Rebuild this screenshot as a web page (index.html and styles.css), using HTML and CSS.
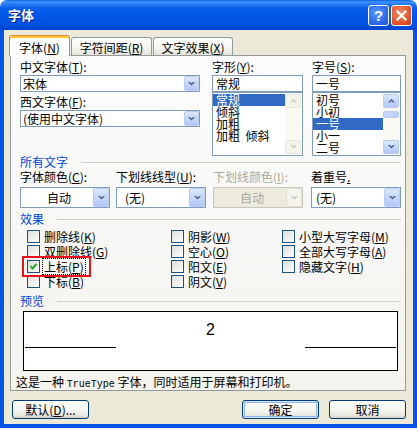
FILE: index.html
```html
<!DOCTYPE html>
<html>
<head>
<meta charset="utf-8">
<link rel="stylesheet" href="styles.css">
</head>
<body>
<div class="window">
	<div class="titlebar">
		<span class="title">字体</span>
		<span class="tb-btn help">?</span>
		<span class="tb-btn close"><svg width="11" height="11" viewBox="0 0 11 11"><path d="M1.5 1.5 L9.5 9.5 M9.5 1.5 L1.5 9.5" stroke="#fff" stroke-width="2.2" stroke-linecap="square"/></svg></span>
	</div>
	<div class="client">
		<div class="tabs">
			<div class="tab active">字体(<u>N</u>)</div>
			<div class="tab t2">字符间距(<u>R</u>)</div>
			<div class="tab t3">文字效果(<u>X</u>)</div>
		</div>
		<div class="panel">
			<div class="fonts">
				<div class="col-face">
					<div class="lbl">中文字体(<u>T</u>):</div>
					<div class="combo small"><span class="combo-text">宋体</span><span class="combo-btn"><svg width="7" height="4" viewBox="0 0 7 4"><polygon points="0,0 2,0 3.5,1.5 5,0 7,0 3.5,3.5" fill="#4D6185"/></svg></span></div>
					<div class="lbl second">西文字体(<u>F</u>):</div>
					<div class="combo small"><span class="combo-text">(使用中文字体)</span><span class="combo-btn"><svg width="7" height="4" viewBox="0 0 7 4"><polygon points="0,0 2,0 3.5,1.5 5,0 7,0 3.5,3.5" fill="#4D6185"/></svg></span></div>
				</div>
				<div class="col-style">
					<div class="lbl">字形(<u>Y</u>):</div>
					<div class="field">常规</div>
					<div class="listbox">
						<div class="items">
							<div class="item sel">常规</div>
							<div class="item">倾斜</div>
							<div class="item">加粗</div>
							<div class="item">加粗&nbsp; 倾斜</div>
						</div>
						<div class="sbar off">
							<span class="sbtn"><svg width="7" height="4" viewBox="0 0 7 4"><polygon points="0,3.5 2,3.5 3.5,2 5,3.5 7,3.5 3.5,0" fill="#C9C7BA"/></svg></span>
							<span class="strack"></span>
							<span class="sbtn"><svg width="7" height="4" viewBox="0 0 7 4"><polygon points="0,0 2,0 3.5,1.5 5,0 7,0 3.5,3.5" fill="#C9C7BA"/></svg></span>
						</div>
					</div>
				</div>
				<div class="col-size">
					<div class="lbl">字号(<u>S</u>):</div>
					<div class="field">一号</div>
					<div class="listbox">
						<div class="items">
							<div class="item">初号</div>
							<div class="item">小初</div>
							<div class="item sel">一号</div>
							<div class="item">小一</div>
							<div class="item">二号</div>
						</div>
						<div class="sbar">
							<span class="sbtn"><svg width="7" height="4" viewBox="0 0 7 4"><polygon points="0,3.5 2,3.5 3.5,2 5,3.5 7,3.5 3.5,0" fill="#4D6185"/></svg></span>
							<span class="thumb"></span>
							<span class="strack"></span>
							<span class="sbtn"><svg width="7" height="4" viewBox="0 0 7 4"><polygon points="0,0 2,0 3.5,1.5 5,0 7,0 3.5,3.5" fill="#4D6185"/></svg></span>
						</div>
					</div>
				</div>
			</div>

			<div class="group">所有文字</div>
			<div class="fmt-row">
				<div>
					<div class="lbl">字体颜色(<u>C</u>):</div>
					<div class="combo"><span class="combo-text center">自动</span><span class="combo-btn"><svg width="7" height="4" viewBox="0 0 7 4"><polygon points="0,0 2,0 3.5,1.5 5,0 7,0 3.5,3.5" fill="#4D6185"/></svg></span></div>
				</div>
				<div>
					<div class="lbl">下划线线型(<u>U</u>):</div>
					<div class="combo"><span class="combo-text wide">(无)</span><span class="combo-btn"><svg width="7" height="4" viewBox="0 0 7 4"><polygon points="0,0 2,0 3.5,1.5 5,0 7,0 3.5,3.5" fill="#4D6185"/></svg></span></div>
				</div>
				<div>
					<div class="lbl dim">下划线颜色(<u>I</u>):</div>
					<div class="combo off"><span class="combo-text center">自动</span><span class="combo-btn"><svg width="7" height="4" viewBox="0 0 7 4"><polygon points="0,0 2,0 3.5,1.5 5,0 7,0 3.5,3.5" fill="#C9C7BA"/></svg></span></div>
				</div>
				<div>
					<div class="lbl">着重号<u>.</u></div>
					<div class="combo"><span class="combo-text">(无)</span><span class="combo-btn"><svg width="7" height="4" viewBox="0 0 7 4"><polygon points="0,0 2,0 3.5,1.5 5,0 7,0 3.5,3.5" fill="#4D6185"/></svg></span></div>
				</div>
			</div>

			<div class="group short">效果</div>
			<div class="checks">
				<div class="check"><span class="box"></span>删除线(<u>K</u>)</div>
				<div class="check"><span class="box"></span>双删除线(<u>G</u>)</div>
				<div class="check marked"><span class="box"><svg width="11" height="11" viewBox="0 0 11 11"><path d="M2.5 5 L4.5 7.5 L8.5 3" stroke="#21A121" stroke-width="2" fill="none"/></svg></span><span class="focus">上标(<u>P</u>)</span><span class="redmark"></span></div>
				<div class="check"><span class="box"></span>下标(<u>B</u>)</div>
				<div class="check"><span class="box"></span>阴影(<u>W</u>)</div>
				<div class="check"><span class="box"></span>空心(<u>O</u>)</div>
				<div class="check"><span class="box"></span>阳文(<u>E</u>)</div>
				<div class="check"><span class="box"></span>阴文(<u>V</u>)</div>
				<div class="check"><span class="box"></span>小型大写字母(<u>M</u>)</div>
				<div class="check"><span class="box"></span>全部大写字母(<u>A</u>)</div>
				<div class="check"><span class="box"></span>隐藏文字(<u>H</u>)</div>
			</div>

			<div class="group short">预览</div>
			<div class="preview">
				<span class="pv-line"></span>
				<span class="pv-text">2</span>
				<span class="pv-line"></span>
			</div>
			<div class="msg">这是一种 <span class="mono">TrueType</span> 字体，同时适用于屏幕和打印机。</div>
		</div>
		<div class="actions">
			<div class="btn">默认(<u>D</u>)...</div>
			<div class="spacer"></div>
			<div class="btn default">确定</div>
			<div class="btn">取消</div>
		</div>
	</div>
</div>
</body>
</html>
```

FILE: styles.css
```css
* {
	box-sizing: border-box;
}

body {
	margin: 0;
	background: #FFF;
	font: 12px/12px "Noto Sans CJK SC", sans-serif;
	color: #000;
}

u {
	text-decoration: underline;
	text-underline-offset: 1px;
}

.window {
	width: 417px;
	height: 428px;
	display: flex;
	flex-direction: column;
}

/* title bar */

.titlebar {
	height: 30px;
	display: flex;
	align-items: center;
	padding: 0 5px 0 8px;
	border-radius: 7px 7px 0 0;
	background: linear-gradient(#0A5FD8, #3D95FF 2px, #2A7BF6 4px, #0A60EC 8px, #0056E6 16px, #0052E0 24px, #0044CE 30px);
}

.title {
	flex: 1;
	color: #FFF;
	font-weight: bold;
	font-size: 13px;
	text-shadow: 1px 1px #0F1F8C;
}

.tb-btn {
	width: 21px;
	height: 21px;
	border: 1px solid #FFF;
	border-radius: 3px;
	display: flex;
	align-items: center;
	justify-content: center;
	color: #FFF;
}

.help {
	font: bold 15px/15px "Liberation Sans", sans-serif;
	background: radial-gradient(circle at 40% 35%, #5A9BFF, #2663E6 70%, #1B4FCF);
}

.close {
	margin-left: 2px;
	background: radial-gradient(circle at 40% 35%, #F08A5E, #E0532A 65%, #C43A16);
}

/* client area */

.client {
	flex: 1;
	background: #ECE9D8;
	border: 4px solid #0553E2;
	border-top: 0;
	display: flex;
	flex-direction: column;
}

.tabs {
	height: 25px;
	display: flex;
	align-items: flex-end;
	padding: 5px 0 0 5px;
}

.tab {
	height: 18px;
	padding-top: 4px;
	margin-left: 1px;
	text-align: center;
	white-space: nowrap;
	border: 1px solid #919B9C;
	border-bottom: 0;
	border-radius: 3px 3px 0 0;
	background: linear-gradient(#FFFFFF, #F3F3EF 60%, #E4E2D8);
}

.tab.active {
	width: 61px;
	height: 21px;
	padding-top: 6px;
	margin: 0 0 -1px 0;
	position: relative;
	z-index: 1;
	border-top: 1px solid #E68B2C;
	background: #FCFCFE;
	box-shadow: inset 0 2px 0 #FFC83C;
}

.tab.t2 {
	width: 81px;
}

.tab.t3 {
	width: 80px;
}

.panel {
	width: 396px;
	height: 336px;
	margin-left: 6px;
	padding: 5px 4px 0 9px;
	border: 1px solid #919B9C;
	background: linear-gradient(#FCFCFE, #F4F3EE);
}

.lbl {
	height: 12px;
	white-space: nowrap;
}

.lbl.second {
	margin-top: 4px;
}

.lbl.dim {
	color: #ACA899;
}

/* font pickers */

.fonts {
	display: flex;
}

.col-face {
	width: 180px;
}

.col-style {
	width: 91px;
	margin-left: 12px;
}

.col-size {
	width: 89px;
	margin-left: 9px;
}

.combo {
	display: flex;
	height: 21px;
	margin-top: 4px;
	border: 1px solid #7F9DB9;
	background: #FFF;
}

.combo.small {
	height: 17px;
	margin-top: 2px;
}

.combo-text {
	flex: 1;
	padding-left: 4px;
	line-height: 19px;
	white-space: nowrap;
}

.combo.small .combo-text {
	line-height: 15px;
	padding-left: 2px;
}

.combo-text.center {
	text-align: center;
}

.combo-text.wide {
	padding-left: 8px;
}

.combo-btn {
	width: 16px;
	display: flex;
	align-items: center;
	justify-content: center;
	border: 1px solid #BACCF4;
	border-radius: 2px;
	background: linear-gradient(#DDE8FE, #C5D6FB 50%, #B2C7F6);
}

.combo.small .combo-btn {
	width: 15px;
}

.combo.off {
	border-color: #C9C7BA;
	background: #EDEBDE;
	color: #ACA899;
}

.combo.off .combo-btn {
	border-color: #E2E0D6;
	background: #F4F3EE;
}

.field {
	height: 17px;
	margin-top: 2px;
	padding-left: 3px;
	line-height: 15px;
	border: 1px solid #7F9DB9;
	background: #FFF;
}

.listbox {
	display: flex;
	height: 64px;
	border: 1px solid #7F9DB9;
	background: #FFF;
}

.items {
	flex: 1;
	padding-top: 1px;
}

.item {
	height: 12px;
	padding-left: 3px;
	white-space: nowrap;
}

.item.sel {
	background: #316AC5;
	color: #FFF;
}

.sbar {
	width: 17px;
	display: flex;
	flex-direction: column;
	padding: 1px 1px 1px 0;
	background: #FAF9F4;
}

.sbtn {
	height: 14px;
	display: flex;
	align-items: center;
	justify-content: center;
	border: 1px solid #BACCF4;
	border-radius: 2px;
	background: linear-gradient(#DDE8FE, #C5D6FB 50%, #B2C7F6);
}

.sbar.off .sbtn {
	border-color: #E8E7DE;
	background: #F4F3EE;
}

.thumb {
	height: 7px;
	margin-top: 3px;
	border: 1px solid #BACCF4;
	border-radius: 2px;
	background: linear-gradient(90deg, #C9D8FC, #BCCEF9);
}

.strack {
	flex: 1;
}

/* group headers */

.group {
	height: 12px;
	display: flex;
	align-items: center;
	color: #0046D5;
}

.group::after {
	content: "";
	flex: 1;
	height: 1px;
	margin-left: 13px;
	background: #D0D0BF;
}

.group.short {
	margin-top: 5px;
}

.fmt-row {
	display: grid;
	grid-template-columns: 96px 97px 98px 90px;
	margin-top: 3px;
}

.fmt-row .combo {
	width: 90px;
}

/* effects */

.checks {
	display: grid;
	grid-template-columns: 144px 111px auto;
	grid-template-rows: repeat(4, 15px);
	grid-auto-flow: column;
	margin-top: 4px;
	padding-left: 7px;
}

.check {
	display: flex;
	align-items: center;
	white-space: nowrap;
}

.check.marked {
	position: relative;
}

.box {
	width: 13px;
	height: 13px;
	margin-right: 4px;
	border: 1px solid #1C5180;
	background: linear-gradient(135deg, #DCDCD7, #FFFFFF);
	display: flex;
}

.focus {
	margin-left: -1px;
	padding: 2px 1px 1px 1px;
	outline: 1px dotted #000;
	outline-offset: 0;
}

.redmark {
	position: absolute;
	left: -5px;
	top: -3px;
	width: 69px;
	height: 21px;
	border: 2px solid #E5141B;
}

/* preview */

.group.short + .preview {
	margin-top: 4px;
}

.checks + .group {
	margin-top: 6px;
}

.preview {
	width: 375px;
	height: 60px;
	margin: 4px 0 0 3px;
	padding: 0 1px;
	display: flex;
	align-items: flex-start;
	border: 1px solid #000;
	background: #FFF;
}

.pv-line {
	width: 91px;
	height: 1px;
	margin-top: 35px;
	background: #000;
}

.pv-text {
	flex: 1;
	margin-top: 10px;
	text-align: center;
	font: 16px/16px "Liberation Sans", sans-serif;
}

.msg {
	margin: 5px 0 0 -4px;
	white-space: nowrap;
}

.mono {
	font: 10px "Liberation Mono", monospace;
}

/* buttons */

.actions {
	display: flex;
	margin-top: 9px;
	padding: 0 7px 0 8px;
}

.spacer {
	flex: 1;
}

.btn {
	width: 77px;
	height: 19px;
	margin-left: 10px;
	line-height: 17px;
	text-align: center;
	border: 1px solid #003C74;
	border-radius: 3px;
	background: linear-gradient(#FFFFFF, #F4F4F0 55%, #E8E6DC 85%, #D6D0C5);
}

.actions .btn:first-child {
	margin-left: 0;
}

.btn.default {
	box-shadow: inset 0 0 0 1px #CEE7FF, inset 0 0 0 2px #95B4EC;
}
```
